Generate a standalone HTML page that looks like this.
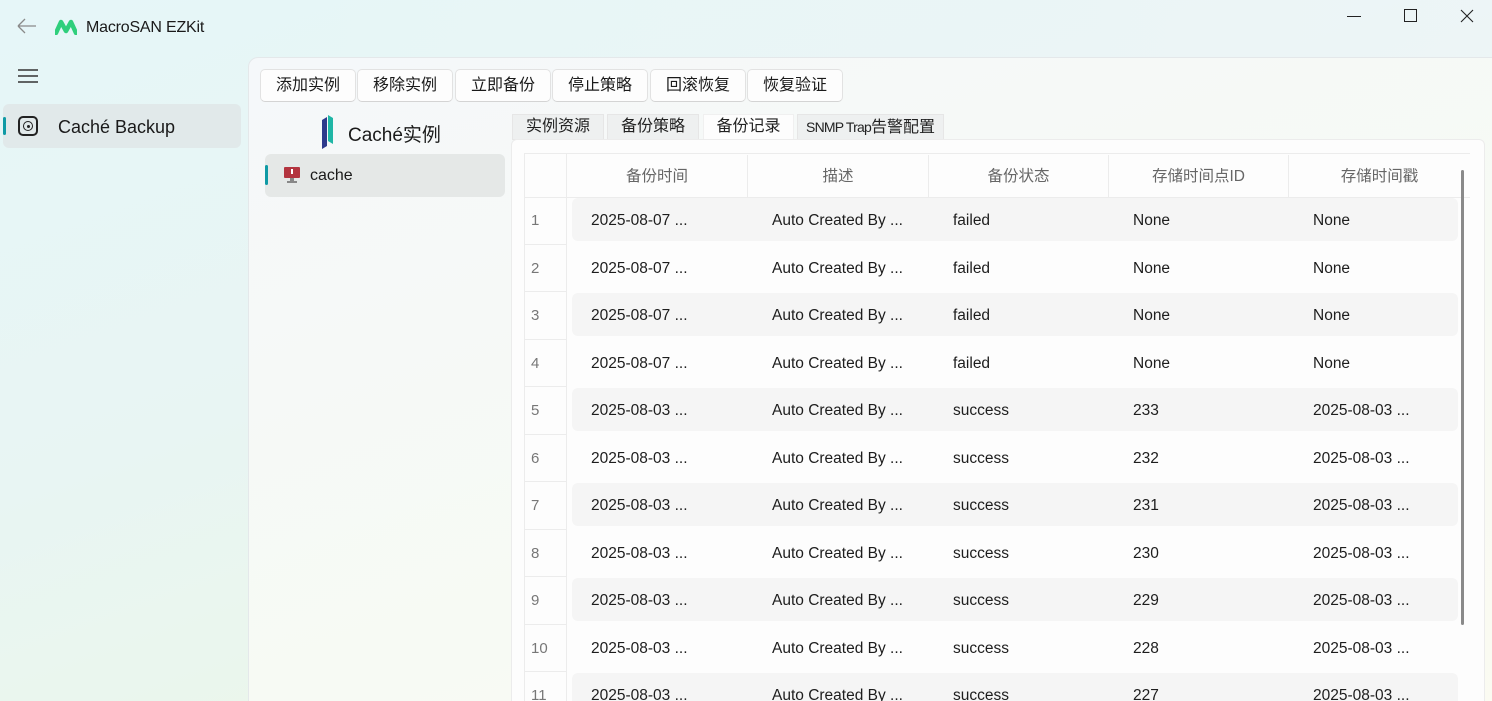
<!DOCTYPE html>
<html style="width:1492px;height:701px;overflow:hidden"><head><meta charset="utf-8"><style>
*{box-sizing:border-box;margin:0;padding:0}
body{width:1492px;height:701px;overflow:hidden;position:relative;font-family:"Liberation Sans","Noto Sans CJK SC",sans-serif;
background:linear-gradient(160deg,#e6f6f8 0%,#e8f5f3 40%,#eff8e2 100%);}
.bgr{position:absolute;left:0;top:0;width:1492px;height:701px;background:linear-gradient(90deg,rgba(0,0,0,0) 0%,rgba(0,0,0,0) 20%,rgba(240,245,250,.6) 100%)}
.abs{position:absolute}
.panel{position:absolute;left:248px;top:57px;width:1260px;height:660px;border-top-left-radius:10px;border:1px solid #e4e8ea;background:linear-gradient(160deg,#f5f8fa 0%,#f7faf4 60%,#fbfbf2 100%)}
.btn{position:absolute;top:69px;height:33px;background:#fdfdfd;border:1px solid #e2e2e2;border-bottom-color:#d4d4d4;border-radius:5px;font-size:16px;color:#1a1a1a;text-align:center;line-height:31px;width:96px}
.tab{position:absolute;top:114px;height:26px;background:#eef0f0;border:1px solid #e6e6e6;font-size:16px;line-height:24px;color:#222;text-align:center}
.card{position:absolute;left:511px;top:139px;width:974px;height:580px;background:#fdfdfd;border:1px solid #ececec;border-radius:6px}
.hd{position:absolute;top:155px;height:44px;font-size:15.5px;color:#666;text-align:center;line-height:44px;border-right:1px solid #ececec}
.cell{position:absolute;font-size:15.5px;color:#1d1d1d}
.num{position:absolute;left:531px;font-size:15px;color:#777}
.stripe{position:absolute;left:572px;width:886px;height:43px;background:#f5f5f5;border-radius:6px}
</style></head><body>
<div class="bgr"></div>
<svg class="abs" style="left:16px;top:16px" width="22" height="20"><path d="M2 10H20M2 10L9 3M2 10L9 17" stroke="#8a8a8a" stroke-width="1.3" fill="none"/></svg>
<svg class="abs" style="left:55px;top:19px" width="22" height="16"><path d="M1 14L6 3L11 12L16 3L21 14" stroke="#2fcf7c" stroke-width="4.5" fill="none" stroke-linejoin="round" stroke-linecap="round"/></svg>
<div class="abs" style="left:86px;top:19px;font-size:16px;color:#1a1a1a;letter-spacing:-0.2px">MacroSAN EZKit</div>
<div class="abs" style="left:1347px;top:16px;width:14px;height:1px;background:#222"></div>
<div class="abs" style="left:1404px;top:9px;width:13px;height:13px;border:1px solid #222"></div>
<svg class="abs" style="left:1460px;top:9px" width="14" height="14"><path d="M1 1L13 13M13 1L1 13" stroke="#222" stroke-width="1.1"/></svg>
<svg class="abs" style="left:17px;top:68px" width="22" height="16"><path d="M1 2H21M1 8H21M1 14H21" stroke="#333" stroke-width="1.5"/></svg>
<div class="abs" style="left:3px;top:104px;width:238px;height:44px;background:#e1e9ea;border-radius:6px"></div>
<div class="abs" style="left:3px;top:117px;width:3px;height:18px;background:#0f9aa5;border-radius:2px"></div>
<div class="abs" style="left:18px;top:116px;width:20px;height:20px;border:2px solid #222;border-radius:5px"></div>
<div class="abs" style="left:23px;top:121px;width:10px;height:10px;border:1.6px solid #222;border-radius:50%"></div>
<div class="abs" style="left:26.5px;top:124.5px;width:3px;height:3px;background:#222;border-radius:50%"></div>
<div class="abs" style="left:58px;top:117px;font-size:18px;color:#1a1a1a">Caché Backup</div>
<div class="panel"></div>
<div class="btn" style="left:260px">添加实例</div>
<div class="btn" style="left:357px">移除实例</div>
<div class="btn" style="left:455px">立即备份</div>
<div class="btn" style="left:552px">停止策略</div>
<div class="btn" style="left:650px">回滚恢复</div>
<div class="btn" style="left:747px">恢复验证</div>
<svg class="abs" style="left:319px;top:114px" width="18" height="36"><path d="M3 6L8 3V32L3 35Z" fill="#2d3a8c"/><path d="M9 1L14 4V30L9 27Z" fill="#1fb6a6"/></svg>
<div class="abs" style="left:348px;top:120px;font-size:19px;color:#1a1a1a">Caché实例</div>
<div class="abs" style="left:265px;top:154px;width:240px;height:43px;background:#e5e8e7;border-radius:6px"></div>
<div class="abs" style="left:265px;top:165px;width:3px;height:20px;background:#0f9aa5;border-radius:2px"></div>
<div class="abs" style="left:284px;top:167px;width:16px;height:11px;background:#b3343f;border-radius:1px"></div>
<div class="abs" style="left:290px;top:178px;width:4px;height:3px;background:#888"></div>
<div class="abs" style="left:287px;top:181px;width:10px;height:1.5px;background:#888"></div>
<div class="abs" style="left:291px;top:169px;width:2px;height:5px;background:#fff"></div>
<div class="abs" style="left:310px;top:167px;font-size:16px;color:#1a1a1a">cache</div>
<div class="tab" style="left:512px;width:92px">实例资源</div>
<div class="tab" style="left:607px;width:92px">备份策略</div>
<div class="tab" style="left:703px;width:91px;background:#fdfdfd;border-color:#f0f0f0">备份记录</div>
<div class="tab" style="left:797px;width:147px;font-size:16px"><span style="font-family:'Liberation Sans Narrow','Liberation Sans',sans-serif;font-size:14px;letter-spacing:-0.8px">SNMP Trap</span>告警配置</div>
<div class="card"></div>
<div class="abs" style="left:524px;top:153px;width:946px;height:1px;background:#ececec"></div>
<div class="abs" style="left:524px;top:153px;width:1px;height:560px;background:#ececec"></div>
<div class="abs" style="left:566px;top:153px;width:1px;height:560px;background:#ececec"></div>
<div class="abs" style="left:524px;top:197px;width:946px;height:1px;background:#ececec"></div>
<div class="hd" style="left:567px;width:181px">备份时间</div>
<div class="hd" style="left:748px;width:181px">描述</div>
<div class="hd" style="left:929px;width:180px">备份状态</div>
<div class="hd" style="left:1109px;width:180px">存储时间点ID</div>
<div class="hd" style="left:1289px;width:181px;border:none">存储时间戳</div>
<div id="rows"></div>
<div class="abs" style="left:1461px;top:170px;width:3px;height:455px;background:#8a8a8a;border-radius:2px"></div>
<script>
var d=[["2025-08-07 ...","failed","None","None"],["2025-08-07 ...","failed","None","None"],["2025-08-07 ...","failed","None","None"],["2025-08-07 ...","failed","None","None"],["2025-08-03 ...","success","233","2025-08-03 ..."],["2025-08-03 ...","success","232","2025-08-03 ..."],["2025-08-03 ...","success","231","2025-08-03 ..."],["2025-08-03 ...","success","230","2025-08-03 ..."],["2025-08-03 ...","success","229","2025-08-03 ..."],["2025-08-03 ...","success","228","2025-08-03 ..."],["2025-08-03 ...","success","227","2025-08-03 ..."]];
var h="";
for(var i=0;i<d.length;i++){var c=220+i*47.5;var t=c-8;
if(i%2==0)h+='<div class="stripe" style="top:'+(c-22)+'px"></div>';
if(i>0)h+='<div class="abs" style="left:524px;top:'+(c-24)+'px;width:43px;height:1px;background:#ececec"></div>';
h+='<div class="num" style="top:'+t+'px">'+(i+1)+'</div>';
h+='<div class="cell" style="left:591px;top:'+t+'px">'+d[i][0]+'</div>';
h+='<div class="cell" style="left:772px;top:'+t+'px">Auto Created By ...</div>';
h+='<div class="cell" style="left:953px;top:'+t+'px">'+d[i][1]+'</div>';
h+='<div class="cell" style="left:1133px;top:'+t+'px">'+d[i][2]+'</div>';
h+='<div class="cell" style="left:1313px;top:'+t+'px">'+d[i][3]+'</div>';}
document.getElementById("rows").innerHTML=h;
</script>
</body></html>
